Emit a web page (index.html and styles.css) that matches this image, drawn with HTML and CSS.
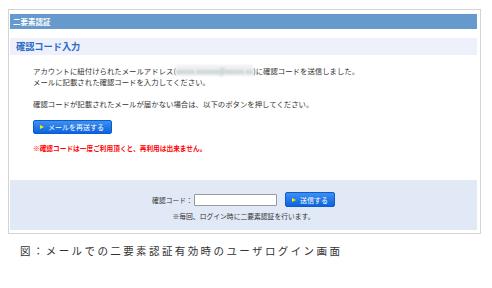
FILE: index.html
```html
<!DOCTYPE html>
<html lang="ja">
<head>
    <meta charset="UTF-8">
    <link rel="stylesheet" href="styles.css">
</head>
<body>
    <div class="frame">
        <div class="head-bar">二要素認証</div>
        <h2 class="title-bar">確認コード入力</h2>

        <div class="message">
            <p>アカウントに紐付けられたメールアドレス(<span class="masked">xxxxx.xxxxxx@xxxxx.xx</span>)に確認コードを送信しました。<br>
            メールに記載された確認コードを入力してください。</p>
            <p class="gap">確認コードが記載されたメールが届かない場合は、以下のボタンを押してください。</p>
            <button class="btn resend"><span class="arrow"></span>メールを再送する</button>
            <p class="warn">※確認コードは一度ご利用頂くと、再利用は出来ません。</p>
        </div>

        <div class="code-area">
            <div class="code-row">
                <label for="code">確認コード：</label>
                <input type="text" id="code">
                <button class="btn send"><span class="arrow"></span>送信する</button>
            </div>
            <p class="note">※毎回、ログイン時に二要素認証を行います。</p>
        </div>
    </div>

    <p class="caption">図：メールでの二要素認証有効時のユーザログイン画面</p>
</body>
</html>
```

FILE: styles.css
```css
body {
    margin: 0;
    background: #fff;
    font-family: "Noto Sans CJK JP", "Noto Sans", sans-serif;
    color: #333;
}
.frame {
    margin: 9px 0 0 8px;
    width: 467px;
    border: 1px solid #d4d4d4;
    padding: 4px 3px 3px 1px;
}
.head-bar {
    height: 15px;
    line-height: 15px;
    background: #6699cc;
    color: #fff;
    font-size: 7.5px;
    font-weight: bold;
    padding-left: 3px;
}
.title-bar {
    margin: 9px 0 0;
    height: 17px;
    line-height: 17px;
    background: #eef0fc;
    color: #2b6bc4;
    font-size: 9.2px;
    font-weight: bold;
    padding-left: 6px;
}
.message {
    padding: 10px 0 26px 23px;
    font-size: 7.4px;
    line-height: 11px;
}
.message p {
    margin: 0;
}
.message .gap {
    margin-top: 11px;
}
.masked {
    color: #9aa;
    background: #eef0f3;
    filter: blur(1px);
}
.btn {
    display: inline-flex;
    align-items: center;
    gap: 4px;
    border: 1px solid #0b5ccf;
    border-radius: 2px;
    background: linear-gradient(#3d90f2, #0d63dc);
    color: #fff;
    font-family: inherit;
    font-size: 7px;
    padding: 0 6px;
    cursor: pointer;
}
.arrow {
    width: 0;
    height: 0;
    border-top: 2.5px solid transparent;
    border-bottom: 2.5px solid transparent;
    border-left: 4px solid #ffe600;
}
.resend {
    margin-top: 11px;
    height: 14px;
    width: 79px;
}
.warn {
    margin-top: 9px !important;
    color: #f00;
    font-weight: bold;
    font-size: 6.7px;
}
.code-area {
    background: #e1e9f6;
    height: 50px;
    padding-top: 12px;
    box-sizing: border-box;
    font-size: 6.8px;
    text-align: center;
}
.code-row {
    display: flex;
    justify-content: center;
    align-items: center;
    height: 15px;
}
.code-row label {
    margin-right: 1px;
}
.code-row input {
    width: 83px;
    height: 12px;
    box-sizing: border-box;
    border: 1px solid #999;
    border-radius: 1px;
    padding: 0;
    margin: 0 8px 0 0;
}
.send {
    width: 50px;
    height: 15px;
    justify-content: center;
}
.note {
    margin: 4px 0 0;
}
.caption {
    margin: 9px 0 0 20px;
    font-size: 10.5px;
    letter-spacing: 2.4px;
    color: #333;
}
```
